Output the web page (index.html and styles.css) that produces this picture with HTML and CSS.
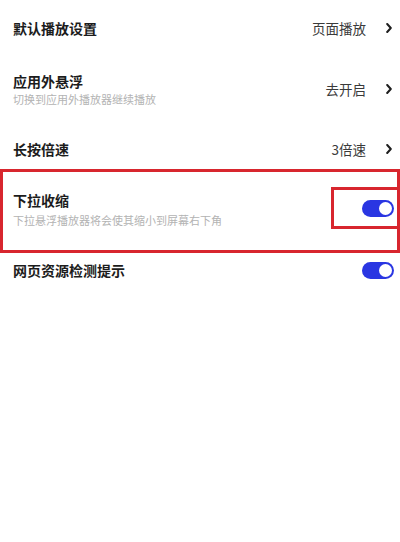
FILE: index.html
```html
<!DOCTYPE html>
<html lang="zh-CN">
<head>
<meta charset="utf-8">
<link rel="stylesheet" href="styles.css">
</head>
<body>
<div class="list">
  <div class="row row-1">
    <div class="text"><div class="title">默认播放设置</div></div>
    <div class="value">页面播放</div>
    <svg class="chev" width="6" height="10" viewBox="0 0 6 10"><polyline points="1.2,1 4.8,5 1.2,9" fill="none" stroke="#1e1e1e" stroke-width="2" stroke-linecap="round" stroke-linejoin="round"/></svg>
  </div>
  <div class="row row-2">
    <div class="text">
      <div class="title">应用外悬浮</div>
      <div class="sub">切换到应用外播放器继续播放</div>
    </div>
    <div class="value">去开启</div>
    <svg class="chev" width="6" height="10" viewBox="0 0 6 10"><polyline points="1.2,1 4.8,5 1.2,9" fill="none" stroke="#1e1e1e" stroke-width="2" stroke-linecap="round" stroke-linejoin="round"/></svg>
  </div>
  <div class="row row-3">
    <div class="text"><div class="title">长按倍速</div></div>
    <div class="value">3倍速</div>
    <svg class="chev" width="6" height="10" viewBox="0 0 6 10"><polyline points="1.2,1 4.8,5 1.2,9" fill="none" stroke="#1e1e1e" stroke-width="2" stroke-linecap="round" stroke-linejoin="round"/></svg>
  </div>
  <div class="row row-4 marked">
    <div class="text">
      <div class="title">下拉收缩</div>
      <div class="sub">下拉悬浮播放器将会使其缩小到屏幕右下角</div>
    </div>
    <div class="mark-inner"><span class="toggle"><span class="knob"></span></span></div>
  </div>
  <div class="row row-5">
    <div class="text"><div class="title">网页资源检测提示</div></div>
    <span class="toggle"><span class="knob"></span></span>
  </div>
</div>
</body>
</html>
```
FILE: styles.css
```css
html, body {
  margin: 0;
  padding: 0;
  background: #ffffff;
  overflow: hidden;
}
body {
  width: 400px;
  height: 542px;
  font-family: "Noto Sans CJK SC", "Noto Sans", sans-serif;
}
.list {
  display: flex;
  flex-direction: column;
}
.row {
  display: flex;
  align-items: center;
  box-sizing: border-box;
  padding: 0 8px 0 13px;
}
.text {
  flex: 1;
  display: flex;
  flex-direction: column;
}
.title {
  font-size: 14px;
  line-height: 17px;
  font-weight: 700;
  color: #1c1c1c;
}
.sub {
  font-size: 11px;
  line-height: 14px;
  color: #b3b3b3;
  margin-top: 2px;
}
.value {
  font-size: 13.5px;
  line-height: 18px;
  color: #3a3a3a;
  margin-right: 20px;
}
.chev {
  display: block;
}
.row-1 { height: 56px; }
.row-2 { height: 66px; }
.row-3 { height: 47px; padding-top: 7px; }
.marked {
  height: 84px;
  border: 3px solid #d8262e;
  align-items: flex-start;
  padding: 15px 0 0 10px;
}
.marked .text { margin-top: 5px; }
.marked .sub { margin-top: 4px; }
.mark-inner {
  box-sizing: border-box;
  width: 69px;
  height: 42px;
  border: 3px solid #d8262e;
  margin-right: -3px;
  padding: 10px 0 0 28px;
}
.row-5 {
  height: 34px;
  padding-right: 6px;
}
.toggle {
  display: block;
  box-sizing: border-box;
  width: 32px;
  height: 17px;
  border-radius: 9px;
  background: #2a36e2;
  position: relative;
}
.knob {
  position: absolute;
  right: 2px;
  top: 2px;
  width: 13px;
  height: 13px;
  border-radius: 50%;
  background: #ffffff;
}
```
